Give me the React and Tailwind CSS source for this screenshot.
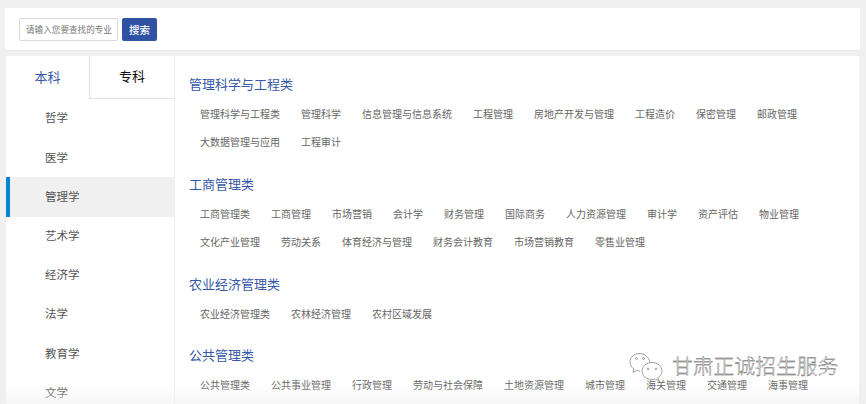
const categories = ['哲学', '医学', '管理学', '艺术学', '经济学', '法学', '教育学', '文学']

const sections = [
  {
    title: '管理科学与工程类',
    majors: ['管理科学与工程类', '管理科学', '信息管理与信息系统', '工程管理', '房地产开发与管理', '工程造价', '保密管理', '邮政管理', '大数据管理与应用', '工程审计'],
  },
  {
    title: '工商管理类',
    majors: ['工商管理类', '工商管理', '市场营销', '会计学', '财务管理', '国际商务', '人力资源管理', '审计学', '资产评估', '物业管理', '文化产业管理', '劳动关系', '体育经济与管理', '财务会计教育', '市场营销教育', '零售业管理'],
  },
  {
    title: '农业经济管理类',
    majors: ['农业经济管理类', '农林经济管理', '农村区域发展'],
  },
  {
    title: '公共管理类',
    majors: ['公共管理类', '公共事业管理', '行政管理', '劳动与社会保障', '土地资源管理', '城市管理', '海关管理', '交通管理', '海事管理'],
  },
]

function SearchBar() {
  return (
    <div className="ml-[5px] mr-[6px] h-[43px] bg-white flex items-center pl-[14px] gap-[4px] border-b border-[#e8e8e8]">
      <div className="w-[99px] h-[23px] border border-[#d9d9d9] rounded-[2px] flex items-center pl-[6px] pt-[3px] text-[8.6px] text-[#777777] whitespace-nowrap">
        请输入您要查找的专业
      </div>
      <button className="w-[35px] h-[23px] bg-[#2f52a5] rounded-[2px] pt-[3px] text-white text-[10.5px] font-medium">搜索</button>
    </div>
  )
}

function Sidebar() {
  return (
    <div className="w-[168px] shrink-0 bg-white">
      <div className="flex h-[43px] text-[13px]">
        <div className="w-[83px] flex items-center justify-center text-[#3558a8]">本科</div>
        <div className="flex-1 flex items-center justify-center text-[#111111] border-l border-b border-[#e2e2e2]">专科</div>
      </div>
      <div>
        {categories.map((name) => (
          <div
            key={name}
            className={
              name === '管理学'
                ? 'h-[39.2px] flex items-center pl-[35px] pt-[1px] text-[11.5px] text-[#555555] bg-[#f0f0f0] border-l-[4px] border-[#0a84d0]'
                : 'h-[39.2px] flex items-center pl-[39px] pt-[1px] text-[11.5px] text-[#555555]'
            }
          >
            {name}
          </div>
        ))}
      </div>
    </div>
  )
}

function MajorSection({ title, majors }) {
  return (
    <div className="mb-[18.5px] nth-3:mb-[17.5px]">
      <h3 className="h-[20px] leading-[20px] text-[13px] font-normal text-[#3558a8]">{title}</h3>
      <div className="mt-[5.5px] pl-[11px] pr-[20px] flex flex-wrap gap-x-[21px]">
        {majors.map((m) => (
          <span key={m} className="h-[28px] leading-[28px] text-[10px] text-[#666666] whitespace-nowrap">{m}</span>
        ))}
      </div>
    </div>
  )
}

function Watermark() {
  return (
    <div className="absolute left-[629px] top-[351px] flex items-center gap-[9px]">
      <svg width="34" height="32" viewBox="0 0 34 32" fill="none" stroke="#8a8a8a" strokeWidth="0.8">
        <path d="M21 11.5C20 6 15.5 2.5 10.5 2.5 5 2.5 1 6.5 1 11c0 3 1.500 5.300 4 7l-1 3.500 4-2c1 .3 2 .4 3 .4" fill="#ffffff" fillOpacity="0.7" />
        <path d="M33 20c0-4.800-4.400-8.500-10-8.500S13 15.200 13 20s4.400 8.500 10 8.500c1.200 0 2.300-.2 3.300-.5l3.500 2-.9-3.300C31.400 25 33 22.700 33 20z" fill="#ffffff" fillOpacity="0.7" />
        <circle cx="7.500" cy="7.500" r="1" />
        <circle cx="14.500" cy="7.500" r="1" />
        <circle cx="19" cy="18" r="0.900" />
        <circle cx="27" cy="18" r="0.900" />
      </svg>
      <span className="text-[20.8px] leading-[24px] font-light text-white whitespace-nowrap [-webkit-text-stroke:0.35px_#444444]">甘肃正诚招生服务</span>
    </div>
  )
}

export default function App() {
  return (
    <div
      className="relative w-[866px] h-[404px] overflow-hidden bg-[#f0f0f0] pt-[8px]"
      style={{ fontFamily: "'Liberation Sans', 'Noto Sans CJK SC', sans-serif" }}
    >
      <SearchBar />
      <div className="ml-[6px] mr-[7px] mt-[5px] flex gap-[1px] h-[360px] overflow-hidden">
        <Sidebar />
        <div className="flex-1 bg-white pl-[14px] pt-[19px] overflow-hidden">
          {sections.map((s) => (
            <MajorSection key={s.title} title={s.title} majors={s.majors} />
          ))}
        </div>
      </div>
      <div className="absolute left-0 right-0 bottom-0 h-[20px] bg-gradient-to-b from-transparent to-[#f0f0f0]/60" />
      <Watermark />
    </div>
  )
}
